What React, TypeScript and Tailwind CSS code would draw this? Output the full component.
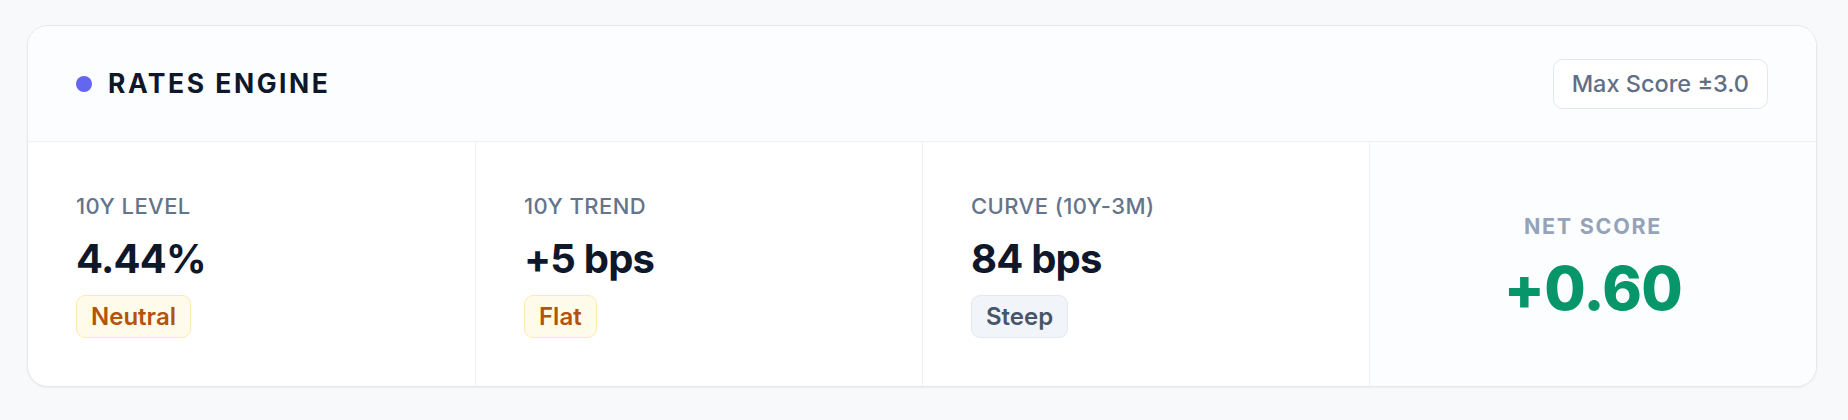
import React from "react";

type Metric = {
  label: string;
  value: string;
  badge: string;
  tone: "amber" | "slate";
};

const metrics: Metric[] = [
  { label: "10Y LEVEL", value: "4.44%", badge: "Neutral", tone: "amber" },
  { label: "10Y TREND", value: "+5 bps", badge: "Flat", tone: "amber" },
  { label: "CURVE (10Y-3M)", value: "84 bps", badge: "Steep", tone: "slate" },
];

function Badge({ text, tone }: { text: string; tone: "amber" | "slate" }) {
  const cls =
    tone === "amber"
      ? "bg-[#fffbeb] border-[#fdeab0] text-[#b4530a]"
      : "bg-[#f1f5f9] border-[#e2e8f0] text-[#475569]";
  return (
    <span
      className={`inline-flex h-[43px] items-center rounded-[9px] border-[1.5px] px-[14px] text-[24px] font-semibold leading-none ${cls}`}
    >
      {text}
    </span>
  );
}

export default function App() {
  return (
    <div
      className="min-h-[420px] bg-[#f8f9fb] pl-[27px] pr-[31px] pt-[25px]"
      style={{ fontFamily: "Inter, 'Noto Sans', sans-serif" }}
    >
      <div className="overflow-hidden rounded-[21px] border border-[#e3e8ef] bg-white shadow-[0_1px_2px_rgba(15,23,42,0.05)]">
        <div className="flex h-[116px] items-center justify-between border-b border-[#eef1f5] bg-[#fcfdfe] pl-[48px] pr-[48px]">
          <div className="flex items-center gap-4">
            <span className="h-4 w-4 rounded-full bg-[#6366f1]" />
            <span className="text-[26.5px] font-bold leading-none tracking-[0.095em] text-[#0f172a]">
              RATES ENGINE
            </span>
          </div>
          <span className="flex h-[50px] items-center rounded-[10px] border-[1.5px] border-[#e2e8f0] bg-white px-[18px] text-[23.5px] font-medium leading-none text-[#5f6f87]">
            Max Score ±3.0
          </span>
        </div>
        <div className="grid grid-cols-4">
          {metrics.map((m, i) => (
            <div
              key={m.label}
              className={`flex flex-col items-start gap-3 p-12 ${i > 0 ? "border-l border-[#eef1f5]" : ""}`}
            >
              <div className="text-[22px] font-medium leading-[33px] tracking-[0.02em] text-[#64748b]">
                {m.label}
              </div>
              <div className="text-[40px] font-bold leading-[48px] tracking-[-0.02em] text-[#0f172a]">
                {m.value}
              </div>
              <Badge text={m.badge} tone={m.tone} />
            </div>
          ))}
          <div className="flex flex-col items-center justify-center gap-[15px] border-l border-[#eef1f5] bg-[#fcfdfe]">
            <div className="text-[21.5px] font-bold leading-[33px] tracking-[0.08em] text-[#94a3b8]">
              NET SCORE
            </div>
            <div className="text-[60px] font-extrabold leading-[60px] tracking-[-0.01em] text-[#079669]">
              +0.60
            </div>
          </div>
        </div>
      </div>
    </div>
  );
}
